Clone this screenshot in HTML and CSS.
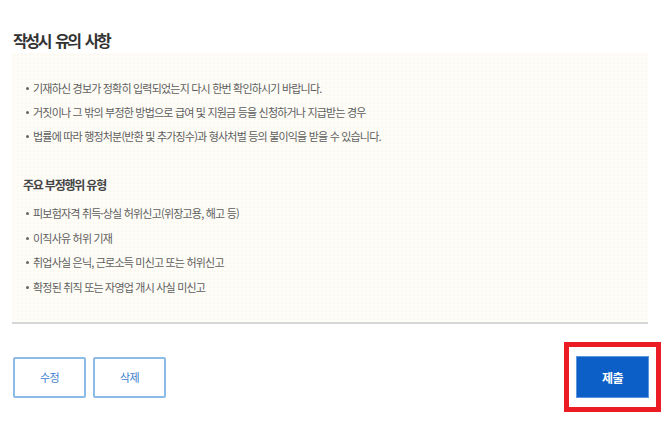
FILE: index.html
```html
<!DOCTYPE html>
<html lang="ko">
<head>
  <meta charset="UTF-8">
  <meta name="viewport" content="width=device-width, initial-scale=1.0">
  <title>작성시 유의 사항</title>
  <link rel="stylesheet" href="styles.css">
</head>
<body>
  <div class="page">
    <h2 class="title">작성시 유의 사항</h2>

    <div class="notice">
      <ul class="dots">
        <li>기재하신 경보가 정확히 입력되었는지 다시 한번 확인하시기 바랍니다.</li>
        <li>거짓이나 그 밖의 부정한 방법으로 급여 및 지원금 등을 신청하거나 지급받는 경우</li>
        <li>법률에 따라 행정처분(반환 및 추가징수)과 형사처벌 등의 불이익을 받을 수 있습니다.</li>
      </ul>

      <h3 class="subtitle">주요 부정행위 유형</h3>
      <ul class="dots types">
        <li>피보험자격 취득·상실 허위신고(위장고용, 해고 등)</li>
        <li>이직사유 허위 기재</li>
        <li>취업사실 은닉, 근로소득 미신고 또는 허위신고</li>
        <li>확정된 취직 또는 자영업 개시 사실 미신고</li>
      </ul>
    </div>

    <div class="actions">
      <div class="left-btns">
        <button class="btn-line">수정</button>
        <button class="btn-line">삭제</button>
      </div>
      <div class="highlight">
        <button class="btn-submit">제출</button>
      </div>
    </div>
  </div>
</body>
</html>
```

FILE: styles.css
```css
body {
  margin: 0;
  padding: 0;
  background: #fff;
  font-family: "Noto Sans CJK KR", "Noto Sans", sans-serif;
  color: #555;
}
.page {
  padding: 30px 6px 0 12px;
}
.title {
  margin: 0 0 3px 1px;
  font-size: 16px;
  line-height: 20px;
  font-weight: 700;
  letter-spacing: -2.4px;
  word-spacing: 3px;
  color: #333;
}
.notice {
  margin-right: 13px;
  padding: 23px 14px 23px 14px;
  background-color: #fdfcf7;
  background-image: radial-gradient(#f7f4ea 0.6px, transparent 0.8px);
  background-size: 4px 4px;
  border-bottom: 2px solid #d6d6d6;
}
.dots {
  list-style: none;
  margin: 0;
  padding: 0;
}
.dots li {
  position: relative;
  padding-left: 7px;
  font-size: 11px;
  line-height: 24px;
  letter-spacing: -0.8px;
  color: #5e5e5e;
}
.types li {
  line-height: 24.5px;
}
.dots li::before {
  content: "";
  position: absolute;
  left: 0;
  top: 11px;
  width: 3px;
  height: 3px;
  border-radius: 50%;
  background: #666;
}
.subtitle {
  margin: 27px 0 6px -3px;
  font-size: 12px;
  line-height: 20px;
  font-weight: 700;
  letter-spacing: -1.2px;
  color: #444;
}
.actions {
  display: flex;
  justify-content: space-between;
  align-items: center;
  margin-top: 18px;
  padding-left: 1px;
}
.left-btns {
  display: flex;
  gap: 7px;
}
.btn-line {
  width: 73px;
  height: 41px;
  background: #fff;
  border: 2px solid #8dbbe8;
  border-radius: 2px;
  color: #3b80d0;
  font-family: inherit;
  font-size: 11px;
  letter-spacing: -0.5px;
  cursor: pointer;
}
.highlight {
  border: 5px solid #ec1c24;
  padding: 9px 7px;
  background: #fff;
}
.btn-submit {
  display: block;
  width: 73px;
  height: 42px;
  background: #0b5fc6;
  border: 1px solid #5b95db;
  color: #fff;
  font-family: inherit;
  font-size: 12px;
  font-weight: 700;
  letter-spacing: -0.5px;
  cursor: pointer;
}
```
